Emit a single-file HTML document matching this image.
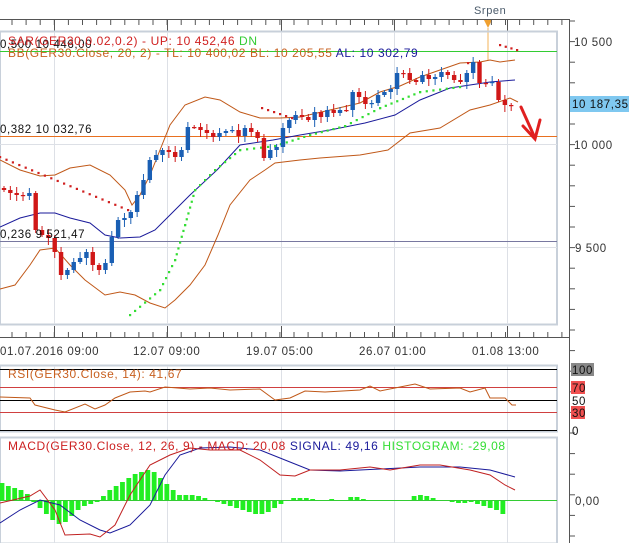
<!DOCTYPE html>
<html><head><meta charset="utf-8"><style>
html,body{margin:0;padding:0;background:#fff;width:629px;height:543px;overflow:hidden}
svg{display:block;font-family:"Liberation Sans",Verdana,sans-serif}
text{letter-spacing:0.6px}
</style></head><body>
<svg id="s" width="629" height="543" viewBox="0 0 629 543" xmlns="http://www.w3.org/2000/svg">
<rect width="629" height="543" fill="#fff"/>
<line x1="0" y1="19.5" x2="570" y2="19.5" stroke="#555"/>
<line x1="569.5" y1="19" x2="569.5" y2="543" stroke="#555"/>
<text x="474" y="14" font-size="11" fill="#4a5a6a">Srpen</text>
<polygon points="484,20 492,20 488,28" fill="#f0a030"/>
<line x1="488" y1="28" x2="488" y2="60" stroke="#f0a030" stroke-width="0.8"/>
<g id="ticks"></g>
<rect x="0" y="31.5" width="557" height="293" fill="none" stroke="#c8d0da" stroke-width="2"/>
<g stroke="#dde0e6">
<line x1="54.5" y1="32" x2="54.5" y2="324"/><line x1="167.5" y1="32" x2="167.5" y2="324"/>
<line x1="281.5" y1="32" x2="281.5" y2="324"/><line x1="394.5" y1="32" x2="394.5" y2="324"/>
<line x1="507.5" y1="32" x2="507.5" y2="324"/>
<line x1="0" y1="144.5" x2="557" y2="144.5"/><line x1="0" y1="247.5" x2="557" y2="247.5"/>
</g>
<line x1="0" y1="51.5" x2="557" y2="51.5" stroke="#33cc33"/>
<line x1="0" y1="136.5" x2="557" y2="136.5" stroke="#e87020"/>
<line x1="0" y1="241.5" x2="557" y2="241.5" stroke="#7878a0"/>
<g id="ind" fill="none"></g>
<g id="candles"></g>
<text x="0" y="48" font-size="11.5" fill="#111">0,500 10 446,00</text>
<text x="8" y="45" font-size="12" fill="#d02020">SAR(GER30,0.02,0.2) -  UP: 10 452,46  <tspan fill="#33cc33">DN</tspan></text>
<text x="8" y="57" font-size="12" fill="#c86020">BB(GER30.Close, 20, 2) -  TL: 10 400,02  BL: 10 205,55  <tspan fill="#1a1a9a">AL: 10 302,79</tspan></text>
<text x="0" y="133" font-size="11.5" fill="#111">0,382 10 032,76</text>
<text x="0" y="238" font-size="11.5" fill="#111">0,236 9 521,47</text>
<text x="574" y="46" font-size="11.5" fill="#333">10 500</text>
<text x="574" y="149" font-size="11.5" fill="#333">10 000</text>
<text x="575" y="252" font-size="11.5" fill="#333">9 500</text>
<rect x="570" y="96" width="59" height="16" fill="#7fc8f0"/>
<text x="572" y="108" font-size="11.5" fill="#111">10 187,35</text>
<g stroke="#e02020" stroke-width="3" fill="none" stroke-linecap="round">
<path d="M521,107 L535,138"/><path d="M523,126 L535,139 L540,120"/>
</g>
<line x1="0" y1="337.5" x2="570" y2="337.5" stroke="#555"/>
<g font-size="11.5" fill="#333">
<text x="0" y="355">01.07.2016 09:00</text><text x="133" y="355">12.07 09:00</text>
<text x="246" y="355">19.07 05:00</text><text x="359" y="355">26.07 01:00</text>
<text x="472" y="355">01.08 13:00</text>
</g>
<rect x="0" y="365.5" width="557" height="66" fill="none" stroke="#c8d0da" stroke-width="2"/>
<g stroke="#dde0e6"><line x1="54.5" y1="366" x2="54.5" y2="431"/><line x1="167.5" y1="366" x2="167.5" y2="431"/><line x1="281.5" y1="366" x2="281.5" y2="431"/><line x1="394.5" y1="366" x2="394.5" y2="431"/><line x1="507.5" y1="366" x2="507.5" y2="431"/></g>
<line x1="0" y1="369.5" x2="557" y2="369.5" stroke="#000"/>
<line x1="0" y1="387.5" x2="557" y2="387.5" stroke="#d04040"/>
<line x1="0" y1="400.5" x2="557" y2="400.5" stroke="#000"/>
<line x1="0" y1="412.5" x2="557" y2="412.5" stroke="#d04040"/>
<line x1="0" y1="430.5" x2="557" y2="430.5" stroke="#000"/>
<polyline fill="none" stroke="#c05818" points="0,397 30,398 35,405 55,410 65,412 85,404 95,409 105,405 115,398 130,392 145,391 150,392 165,387 190,389 210,388 230,390 260,389 275,400 290,398 305,391 325,392 360,390 370,386 380,391 400,387 415,384 430,389 460,388 470,392 485,388 490,398 505,398 512,405 516,405"/>
<text x="8" y="378" font-size="12" fill="#c86020">RSI(GER30.Close, 14): 41,67</text>
<rect x="571" y="363" width="23" height="13" fill="#888"/><text x="572" y="374" font-size="11.5" fill="#111">100</text>
<rect x="571" y="381" width="14" height="13" fill="#f05050"/><text x="572" y="392" font-size="11.5" fill="#111">70</text>
<text x="572" y="405" font-size="11.5" fill="#111">50</text>
<rect x="571" y="406" width="14" height="13" fill="#f05050"/><text x="572" y="417" font-size="11.5" fill="#111">30</text>
<text x="572" y="435" font-size="11.5" fill="#111">0</text>
<rect x="0" y="437.5" width="557" height="106" fill="none" stroke="#c8d0da" stroke-width="2"/>
<g stroke="#dde0e6"><line x1="54.5" y1="438" x2="54.5" y2="543"/><line x1="167.5" y1="438" x2="167.5" y2="543"/><line x1="281.5" y1="438" x2="281.5" y2="543"/><line x1="394.5" y1="438" x2="394.5" y2="543"/><line x1="507.5" y1="438" x2="507.5" y2="543"/></g>
<g id="hist" fill="#22ee22"></g>
<line x1="0" y1="500.5" x2="557" y2="500.5" stroke="#33cc33"/>
<polyline fill="none" stroke="#1a1a9a" points="0,523 20,510 40,500 60,505 80,520 100,530 110,533 130,525 150,505 165,475 180,455 200,448 230,447 260,450 290,462 310,470 340,471 380,469 420,467 460,467 490,470 515,477"/>
<polyline fill="none" stroke="#c02020" points="0,503 30,496 40,490 55,510 65,535 90,534 100,537 115,525 130,495 150,465 170,455 190,448 210,450 240,450 260,460 280,475 295,476 310,470 340,470 370,467 390,470 420,465 440,465 470,470 490,475 505,485 515,490"/>
<text x="8" y="450" font-size="12" fill="#cc2020">MACD(GER30.Close, 12, 26, 9) -  MACD: 20,08  <tspan fill="#1a1a9a">SIGNAL: 49,16</tspan>  <tspan fill="#33dd33">HISTOGRAM: -29,08</tspan></text>
<text x="575" y="505" font-size="11.5" fill="#333">0,00</text>
</svg>
<script>
(function(){
var NS="http://www.w3.org/2000/svg";
function el(p,t,a){var e=document.createElementNS(NS,t);for(var k in a)e.setAttribute(k,a[k]);p.appendChild(e);return e;}
var tk=document.getElementById('ticks');
for(var x=12;x<568;x+=14.1){el(tk,'line',{x1:x,y1:19,x2:x,y2:25,stroke:'#555'});el(tk,'line',{x1:x,y1:332,x2:x,y2:337,stroke:'#555'});}
[54,167,281,394,507].forEach(function(x){el(tk,'line',{x1:x+.5,y1:19,x2:x+.5,y2:31,stroke:'#555'});el(tk,'line',{x1:x+.5,y1:326,x2:x+.5,y2:337,stroke:'#555'});});
for(var y=21;y<543;y+=20.6){el(tk,'line',{x1:569,y1:y,x2:575,y2:y,stroke:'#555'});}
var ind=document.getElementById('ind');
function pl(pts,c,w){el(ind,'polyline',{points:pts,stroke:c,'stroke-width':w||1,fill:'none'});}
pl("0,160 20,170 40,176 55,175 70,168 90,165 110,175 125,190 132,205 140,195 150,175 160,150 170,125 185,105 205,97 220,100 240,112 260,118 280,118 300,117 330,110 360,103 380,92 400,86 420,77 440,70 460,63 480,62 490,60 500,62 515,60","#c05818");
pl("0,289 15,285 30,265 40,250 55,248 70,265 85,280 105,295 120,292 135,295 150,303 165,308 175,300 190,285 205,265 218,235 230,205 250,180 265,170 275,163 300,160 320,158 360,155 388,150 410,133 440,128 470,110 490,105 510,98 518,102","#c05818");
pl("0,227 20,218 40,213 55,213 70,218 90,223 105,235 120,238 140,237 155,230 170,215 190,195 217,170 240,145 273,140 300,135 330,130 365,123 395,115 420,100 450,88 490,82 515,80","#1a1a9a");
function dots(x0,y0,x1,y1,n,c){for(var i=0;i<=n;i++){el(ind,'rect',{x:x0+(x1-x0)*i/n-1,y:y0+(y1-y0)*i/n-1,width:2.2,height:2.2,fill:c});}}
dots(0,157,128,210,20,'#d02020');dots(262,108,292,118,5,'#d02020');dots(468,63,480,63,2,'#d02020');dots(500,45,517,50,3,'#d02020');
var g=[[130,315],[160,290],[175,260],[185,225],[195,190],[215,170],[240,150],[275,146],[310,135],[345,126],[380,108],[420,92],[460,87]];
for(var i=0;i<g.length-1;i++){var a=g[i],b=g[i+1],n=Math.max(1,Math.round(Math.hypot(b[0]-a[0],b[1]-a[1])/6.5));dots(a[0],a[1],b[0],b[1],n,'#33dd33');}
var cl=[190,193,195,196,193,230,235,238,252,275,270,262,258,252,265,270,263,237,220,218,212,195,180,160,155,150,152,157,150,127,127,130,133,137,133,131,130,136,128,132,138,158,150,147,128,120,115,117,120,112,117,110,113,110,110,92,97,104,103,95,92,89,73,73,80,82,75,79,77,72,75,80,82,73,62,83,83,82,100,105,105];
var cg=document.getElementById('candles');var prev=188;
for(var i=0;i<cl.length;i++){var x=4+i*6.34,o=prev,c=cl[i];var up=c<o;var col=up?'#1a5fb4':'#d01818';
var tp=Math.min(o,c),bt=Math.max(o,c);var h=((i*7)%5)+2,l=((i*11)%6)+2;
el(cg,'line',{x1:x,y1:tp-h,x2:x,y2:bt+l,stroke:col,'stroke-width':1});
el(cg,'rect',{x:x-2.2,y:tp,width:4.4,height:Math.max(1.2,bt-tp),fill:col});prev=c;}
var hg=document.getElementById('hist');
var hv2=[17,14,12,10,6,-2,-8,-14,-20,-24,-22,-16,-10,-6,-4,-2,4,10,14,18,22,26,28,30,28,22,16,10,5,5,5,4,2,0,-2,-4,-6,-8,-10,-12,-14,-14,-12,-8,-4,0,2,2,2,1,0,0,1,0,0,3,3,1,0,0,0,0,0,0,0,4,5,4,2,0,0,-2,-3,-3,-2,-4,-6,-8,-10,-14];
for(var i=0;i<hv2.length;i++){var x=2+i*6.34,v=hv2[i];if(v==0)continue;el(hg,'rect',{x:x-2.4,y:v>0?500-v:500,width:4.8,height:Math.abs(v)});}
})();
</script>
</body></html>
